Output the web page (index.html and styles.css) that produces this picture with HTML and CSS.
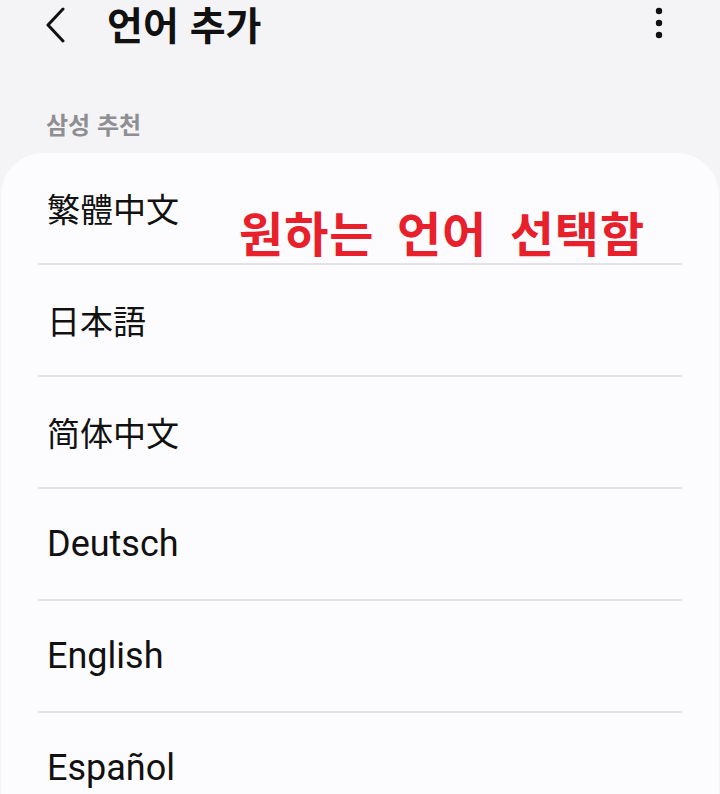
FILE: index.html
```html
<!DOCTYPE html>
<html lang="ko">
<head>
    <meta charset="UTF-8">
    <meta name="viewport" content="width=device-width, initial-scale=1.0">
    <title>언어 추가</title>
    <link rel="stylesheet" href="styles.css">
</head>
<body>
    <header class="appbar">
        <svg class="back" width="24" height="40" viewBox="0 0 24 40">
            <polyline points="19,6 4,22 19,38" fill="none" stroke="#111" stroke-width="3" stroke-linecap="round" stroke-linejoin="round"/>
        </svg>
        <h1 class="title">언어 추가</h1>
        <svg class="more" width="10" height="36" viewBox="0 0 10 36">
            <circle cx="5" cy="6" r="3.2" fill="#111"/>
            <circle cx="5" cy="18" r="3.2" fill="#111"/>
            <circle cx="5" cy="30" r="3.2" fill="#111"/>
        </svg>
    </header>

    <div class="section-label">삼성 추천</div>

    <div class="card">
        <div class="row cjk">繁體中文</div>
        <div class="row cjk">日本語</div>
        <div class="row cjk">简体中文</div>
        <div class="row">Deutsch</div>
        <div class="row">English</div>
        <div class="row">Español</div>
    </div>

    <div class="note">원하는 언어 선택함</div>
</body>
</html>
```

FILE: styles.css
```css
body {
    margin: 0;
    background: #f4f4f6;
    font-family: Roboto, "Noto Sans", "Noto Sans CJK KR", sans-serif;
    color: #111;
    height: 794px;
    overflow: hidden;
    position: relative;
}
.appbar {
    height: 46px;
    display: flex;
    align-items: center;
    padding-left: 44px;
    padding-right: 56px;
}
.title {
    margin: 0 0 0 39px;
    font-family: "Noto Sans CJK KR", sans-serif;
    font-size: 39px;
    font-weight: 700;
    flex: 1;
    line-height: 46px;
}
.section-label {
    margin-top: 63px;
    padding-left: 46px;
    font-family: "Noto Sans CJK KR", sans-serif;
    font-size: 24px;
    font-weight: 700;
    color: #8f8f93;
    line-height: 30px;
}
.card {
    margin: 14px 1px 0;
    background: #fcfcfe;
    border-radius: 42px 42px 0 0;
    padding: 0 37px;
}
.row {
    height: 110px;
    border-bottom: 2px solid #e3e3e6;
    display: flex;
    align-items: center;
    padding-left: 9px;
    font-size: 36px;
    color: #111;
}
.row.cjk {
    font-family: "Noto Sans CJK TC", "Noto Sans CJK JP", sans-serif;
    font-size: 33px;
}
.note {
    position: absolute;
    left: 239px;
    top: 198px;
    font-family: "Noto Sans CJK KR", sans-serif;
    font-size: 48px;
    font-weight: 700;
    color: #e8202b;
    letter-spacing: 1px;
    word-spacing: 8px;
    line-height: 66px;
}
```
